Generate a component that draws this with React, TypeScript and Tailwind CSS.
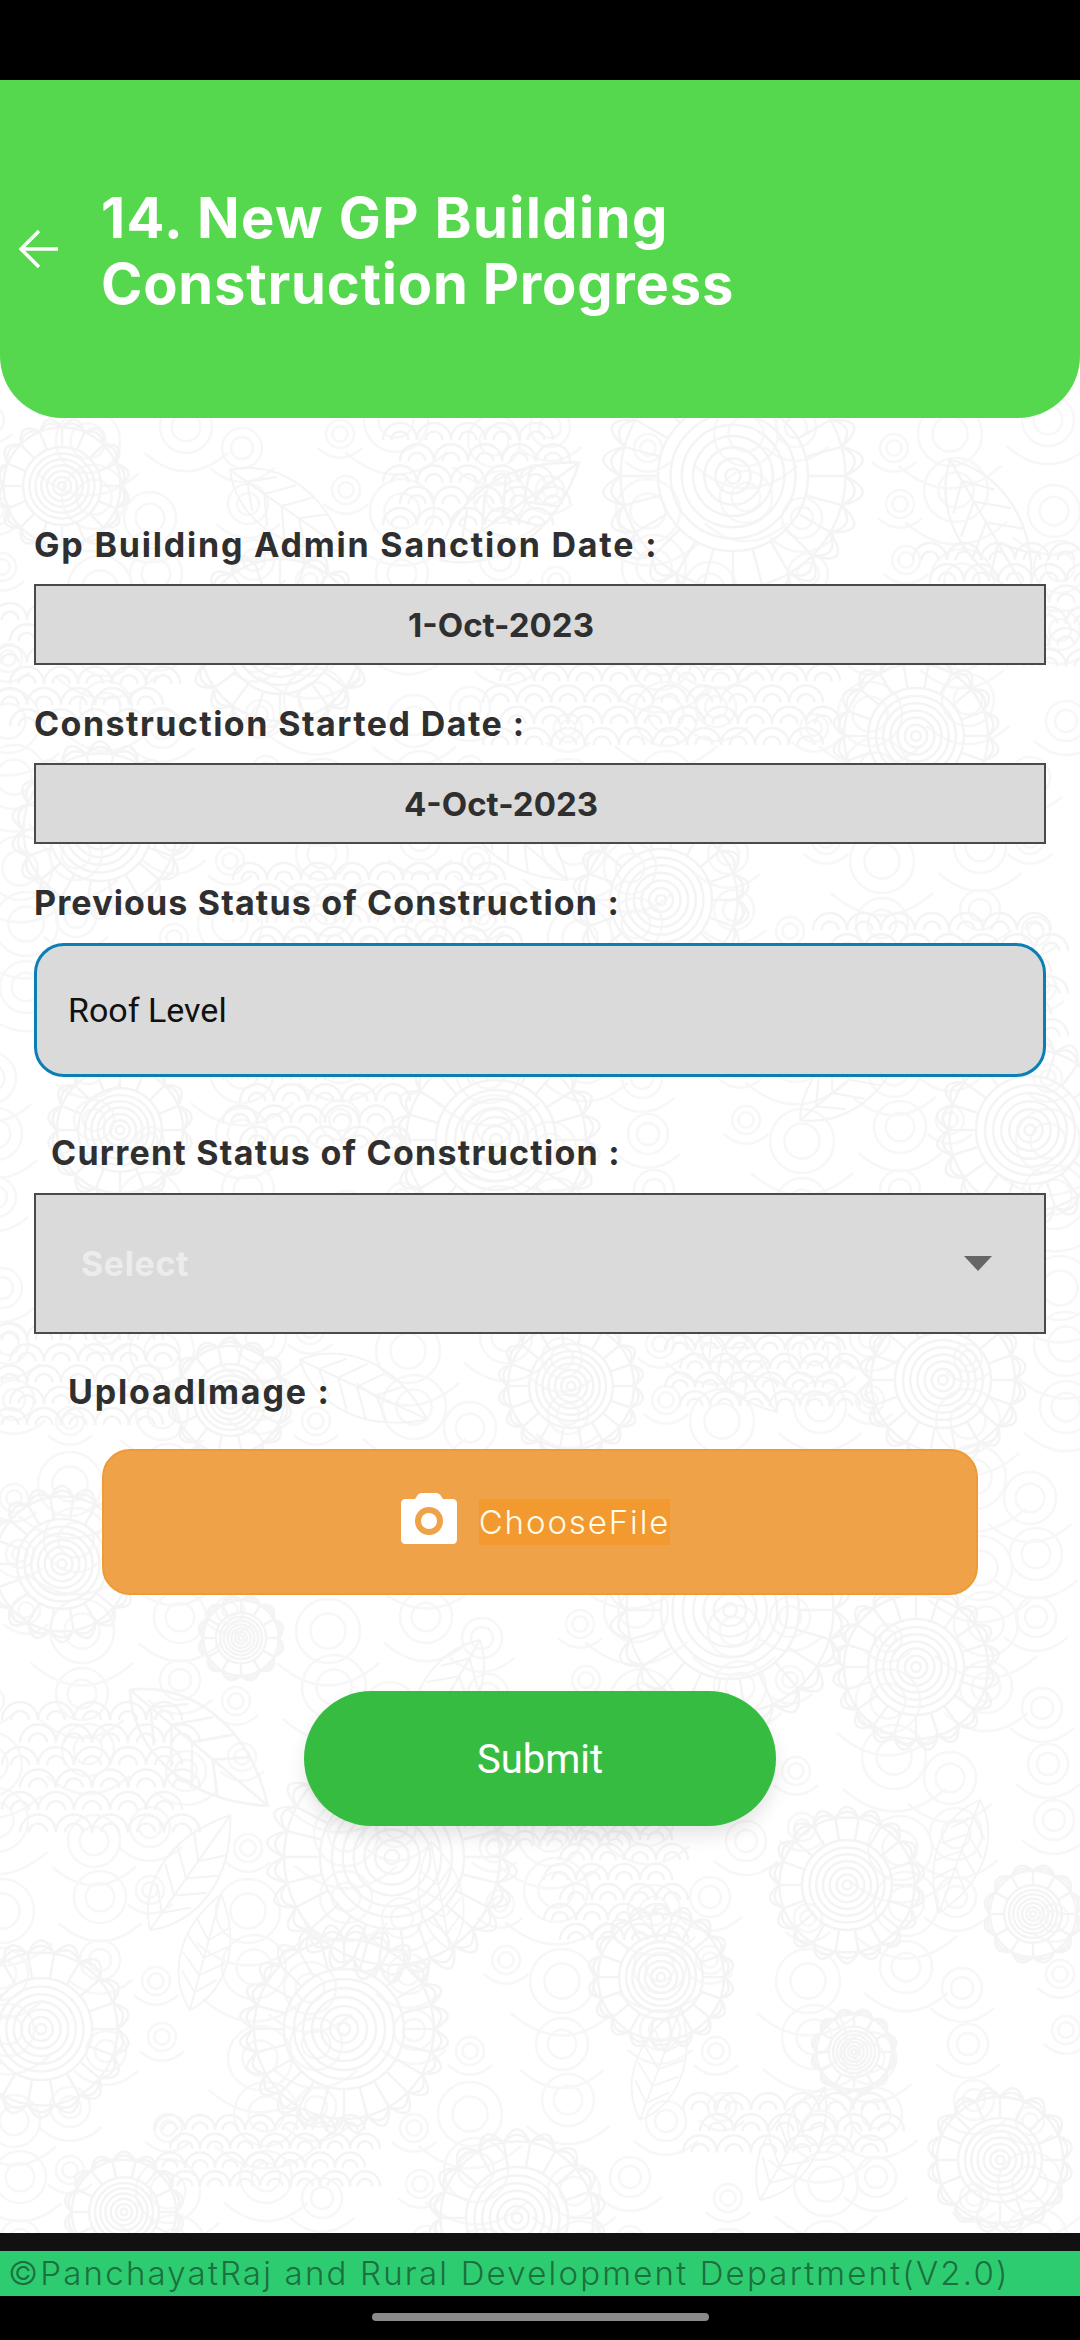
const ink = "#f4f4f4";

function polar(a: number, r: number) {
  return { x: Math.cos(a) * r, y: Math.sin(a) * r };
}

function Mandala({ x, y, r, petals = 24 }: { x: number; y: number; r: number; petals?: number }) {
  const spokes = Array.from({ length: petals }, (_, i) => (i * 2 * Math.PI) / petals);
  const step = (2 * Math.PI) / petals;
  return (
    <g transform={`translate(${x} ${y})`} fill="none" stroke={ink} strokeWidth={2.5}>
      {[0.9, 0.6, 0.5, 0.41, 0.32, 0.23, 0.14, 0.06].map((k) => (
        <circle key={k} r={r * k} />
      ))}
      {spokes.map((a, i) => {
        const p1 = polar(a, r * 0.6);
        const p2 = polar(a, r * 0.9);
        return <line key={i} x1={p1.x} y1={p1.y} x2={p2.x} y2={p2.y} />;
      })}
      {/* scalloped rim */}
      {spokes.map((a, i) => {
        const p1 = polar(a, r * 0.9);
        const p2 = polar(a + step, r * 0.9);
        const c = polar(a + step / 2, r * 1.2);
        const c2 = polar(a + step / 2, r * 1.07);
        return (
          <g key={i}>
            <path d={`M${p1.x} ${p1.y}Q${c.x} ${c.y} ${p2.x} ${p2.y}`} />
            <path d={`M${p1.x} ${p1.y}Q${c2.x} ${c2.y} ${p2.x} ${p2.y}`} />
          </g>
        );
      })}
    </g>
  );
}

function Leaf({ x, y, size, rotate }: { x: number; y: number; size: number; rotate: number }) {
  return (
    <g transform={`translate(${x} ${y}) rotate(${rotate}) scale(${size / 100})`} fill="none" stroke={ink} strokeWidth={3}>
      <path d="M0 0C40 -45 120 -60 200 0C120 60 40 45 0 0Z" />
      <path d="M0 0H200M30 0L60 -30M60 0L90 -36M90 0L120 -36M120 0L150 -28M30 0L60 30M60 0L90 36M90 0L120 36M120 0L150 28" />
    </g>
  );
}

// little fish-scale arcs, they fill the gaps between the big shapes
function Scales({ x, y, rows, cols, s }: { x: number; y: number; rows: number; cols: number; s: number }) {
  const arcs = [];
  for (let r = 0; r < rows; r++) {
    for (let c = 0; c < cols; c++) {
      const cx = x + c * s + (r % 2 ? s / 2 : 0);
      const cy = y + (r * s) / 1.6;
      arcs.push(
        <path
          key={`${r}-${c}`}
          d={`M${cx - s / 2} ${cy}A${s / 2} ${s / 2} 0 0 1 ${cx + s / 2} ${cy}M${cx - s / 4} ${cy}A${s / 4} ${s / 4} 0 0 1 ${cx + s / 4} ${cy}`}
        />,
      );
    }
  }
  return (
    <g fill="none" stroke={ink} strokeWidth={2.5}>
      {arcs}
    </g>
  );
}

// faint swirls scattered over the whole page so no area is blank
function Filler() {
  const items = [];
  for (let row = 0; row < 27; row++) {
    for (let col = 0; col < 14; col++) {
      const seed = (row * 37 + col * 61) % 29;
      const cx = col * 80 + (seed % 7) * 6 - 10;
      const cy = 420 + row * 70 + (seed % 5) * 7;
      const r = 14 + (seed % 4) * 6;
      items.push(
        <g key={`${row}-${col}`}>
          <circle cx={cx} cy={cy} r={r} />
          <circle cx={cx} cy={cy} r={r * 0.55} />
          <path d={`M${cx - r * 1.6} ${cy + r}Q${cx} ${cy + r * 2.4} ${cx + r * 1.6} ${cy + r}`} />
        </g>,
      );
    }
  }
  return (
    <g fill="none" stroke="#f7f7f7" strokeWidth={2.5}>
      {items}
    </g>
  );
}

const mandalas = [
  { x: 733, y: 476, r: 125, petals: 24 },
  { x: 62, y: 486, r: 65, petals: 16 },
  { x: 280, y: 640, r: 90, petals: 20 },
  { x: 916, y: 736, r: 80, petals: 18 },
  { x: 100, y: 830, r: 85, petals: 18 },
  { x: 661, y: 900, r: 85, petals: 18 },
  { x: 496, y: 1140, r: 100, petals: 22 },
  { x: 1030, y: 1130, r: 90, petals: 20 },
  { x: 120, y: 1130, r: 70, petals: 16 },
  { x: 571, y: 1386, r: 70, petals: 18 },
  { x: 943, y: 1380, r: 80, petals: 18 },
  { x: 230, y: 1400, r: 60, petals: 14 },
  { x: 62, y: 1564, r: 75, petals: 18 },
  { x: 241, y: 1638, r: 42, petals: 12 },
  { x: 730, y: 1610, r: 115, petals: 22 },
  { x: 916, y: 1667, r: 80, petals: 20 },
  { x: 392, y: 1857, r: 120, petals: 26 },
  { x: 847, y: 1885, r: 75, petals: 18 },
  { x: 1033, y: 1914, r: 48, petals: 12 },
  { x: 661, y: 1977, r: 70, petals: 18 },
  { x: 344, y: 2029, r: 100, petals: 24 },
  { x: 854, y: 2052, r: 42, petals: 12 },
  { x: 41, y: 2029, r: 85, petals: 18 },
  { x: 124, y: 2212, r: 58, petals: 14 },
  { x: 517, y: 2218, r: 85, petals: 18 },
  { x: 1000, y: 2160, r: 70, petals: 16 },
];

const leaves = [
  { x: 440, y: 560, size: 85, rotate: -35 },
  { x: 230, y: 470, size: 70, rotate: 35 },
  { x: 950, y: 460, size: 80, rotate: 60 },
  { x: 460, y: 790, size: 70, rotate: 40 },
  { x: 800, y: 1120, size: 70, rotate: -40 },
  { x: 300, y: 1360, size: 70, rotate: 25 },
  { x: 700, y: 1320, size: 60, rotate: 50 },
  { x: 130, y: 1690, size: 90, rotate: 40 },
  { x: 480, y: 1640, size: 70, rotate: 120 },
  { x: 150, y: 1930, size: 70, rotate: -55 },
  { x: 190, y: 2010, size: 60, rotate: -75 },
  { x: 450, y: 1950, size: 55, rotate: -100 },
  { x: 980, y: 1800, size: 60, rotate: 110 },
  { x: 640, y: 2120, size: 60, rotate: -70 },
  { x: 760, y: 2200, size: 65, rotate: -60 },
];

const scales = [
  { x: 400, y: 440, rows: 5, cols: 5, s: 34 },
  { x: 930, y: 560, rows: 6, cols: 5, s: 34 },
  { x: 10, y: 620, rows: 6, cols: 5, s: 34 },
  { x: 500, y: 660, rows: 5, cols: 10, s: 34 },
  { x: 250, y: 880, rows: 5, cols: 8, s: 34 },
  { x: 830, y: 930, rows: 6, cols: 7, s: 34 },
  { x: 240, y: 1080, rows: 4, cols: 5, s: 34 },
  { x: 680, y: 1350, rows: 4, cols: 6, s: 30 },
  { x: 10, y: 1340, rows: 5, cols: 5, s: 34 },
  { x: 20, y: 1720, rows: 6, cols: 5, s: 36 },
  { x: 560, y: 1840, rows: 6, cols: 4, s: 32 },
  { x: 480, y: 1790, rows: 4, cols: 5, s: 30 },
  { x: 170, y: 2130, rows: 4, cols: 7, s: 30 },
  { x: 700, y: 2110, rows: 3, cols: 6, s: 34 },
];

function Backdrop() {
  return (
    <svg className="absolute inset-0" width={1080} height={2340} viewBox="0 0 1080 2340" aria-hidden>
      <Filler />
      {scales.map((s, i) => (
        <Scales key={i} {...s} />
      ))}
      {leaves.map((l, i) => (
        <Leaf key={i} {...l} />
      ))}
      {mandalas.map((m, i) => (
        <Mandala key={i} {...m} />
      ))}
    </svg>
  );
}

function Label({ children, className }: { children: string; className: string }) {
  return (
    <div className={`h-[40px] font-['Inter',sans-serif] text-[34px] font-bold leading-[40px] text-[#2f2f2f] ${className}`}>
      {children}
    </div>
  );
}

function DateBox({ value }: { value: string }) {
  return (
    <div className="mt-[19px] flex h-[81px] items-center justify-center border-2 border-[#4a4a4a] bg-[#dadada] pr-[78px] pt-[2px] font-['Inter',sans-serif] text-[33px] font-bold text-[#2f2f2f]">
      {value}
    </div>
  );
}

function CameraIcon() {
  return (
    <svg width={56} height={51} viewBox="0 0 56 51" aria-hidden>
      <path
        d="M4 6h10l2-3c1-2 3-3 5-3h14c2 0 4 1 5 3l2 3h10c2 0 4 2 4 4v37c0 2-2 4-4 4H4c-2 0-4-2-4-4V10c0-2 2-4 4-4z"
        fill="#fff"
      />
      <circle cx={28} cy={28} r={14} fill="#efa247" />
      <circle cx={28} cy={28} r={8} fill="#fff" />
    </svg>
  );
}

export default function App() {
  return (
    <div className="relative flex h-[2340px] w-[1080px] flex-col overflow-hidden bg-white">
      <Backdrop />
      <div className="relative h-[80px] shrink-0 bg-black" />

      <header className="relative flex h-[338px] shrink-0 items-center rounded-b-[62px] bg-[#55d84e] pl-[19px]">
        <svg width={40} height={40} viewBox="0 0 40 40" fill="none" stroke="#fff" strokeWidth={3.5} aria-hidden>
          <path d="M39 20H3M20 2L2 20l18 18" />
        </svg>
        <h1 className="ml-[42px] pt-[3px] font-['Inter',sans-serif] text-[56px] font-bold leading-[66px] text-white">
          <span className="tracking-[1.4px]">14. New GP Building</span>
          <br />
          <span className="tracking-[0.8px]">Construction Progress</span>
        </h1>
      </header>

      <main className="relative flex flex-1 flex-col px-[34px] pt-[107px]">
        <Label className="tracking-[1.8px]">Gp Building Admin Sanction Date :</Label>
        <DateBox value="1-Oct-2023" />

        <Label className="mt-[39px] tracking-[1.45px]">Construction Started Date :</Label>
        <DateBox value="4-Oct-2023" />

        <Label className="mt-[39px] tracking-[1.15px]">Previous Status of Construction :</Label>
        <div className="mt-[20px] flex h-[134px] items-center rounded-[30px] border-[3px] border-[#0b7fb5] bg-[#dadada] pl-[31px] font-['Roboto',sans-serif] text-[34px] text-[#111]">
          Roof Level
        </div>

        <Label className="mt-[56px] pl-[17px] tracking-[1.25px]">Current Status of Construction :</Label>
        <div className="mt-[20px] flex h-[141px] items-center justify-between border-2 border-[#4a4a4a] bg-[#dadada] pl-[45px] pr-[52px]">
          <span className="font-['Inter',sans-serif] text-[34px] font-bold tracking-[0.6px] text-[#ececec]">Select</span>
          <svg width={28} height={15} viewBox="0 0 28 15" aria-hidden>
            <path d="M0 0h28L14 15z" fill="#666" />
          </svg>
        </div>

        <Label className="mt-[38px] pl-[34px] tracking-[1.8px]">UploadImage :</Label>
        <div className="mx-[68px] mt-[37px] flex h-[146px] items-center justify-center gap-[22px] rounded-[28px] border-2 border-[#ee9a35] bg-[#efa247] pr-[9px]">
          <div className="-mt-[8px] flex">
            <CameraIcon />
          </div>
          <span className="bg-[#f29a30] font-['Inter',sans-serif] text-[33px] font-light leading-[46px] tracking-[1.9px] text-[#fffbe8]">ChooseFile</span>
        </div>

        <button className="mx-auto mt-[96px] h-[135px] w-[472px] rounded-full bg-[#37bc42] pt-[2px] font-['Roboto',sans-serif] text-[40px] text-white shadow-[0_10px_18px_rgba(0,0,0,0.1)]">
          Submit
        </button>
      </main>

      <footer className="relative shrink-0">
        <div className="h-[18px] bg-[#111]" />
        <div className="flex h-[45px] items-center whitespace-nowrap bg-[#2ecc71] pl-[8px] font-['Inter',sans-serif] text-[33px] font-light tracking-[2.2px] text-[#1c6f3e]">
          ©PanchayatRaj and Rural Development Department(V2.0)
        </div>
        <div className="flex h-[44px] justify-center bg-black pt-[17px]">
          <div className="h-[8px] w-[337px] rounded-full bg-[#8a8a8a]" />
        </div>
      </footer>
    </div>
  );
}
